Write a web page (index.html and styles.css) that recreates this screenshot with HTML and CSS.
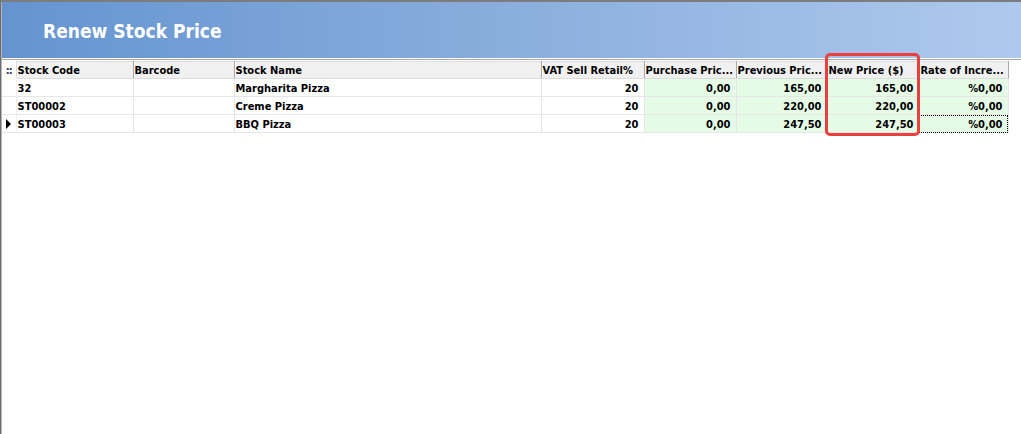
FILE: index.html
```html
<!DOCTYPE html>
<html lang="en">
<head>
    <meta charset="UTF-8">
    <title>Renew Stock Price</title>
    <link rel="stylesheet" href="styles.css">
</head>
<body>
    <div class="window">
        <div class="banner">
            <h1>Renew Stock Price</h1>
        </div>
        <div class="grid-area">
            <table class="grid">
                <colgroup>
                    <col class="c-ind">
                    <col class="c-code">
                    <col class="c-barcode">
                    <col class="c-name">
                    <col class="c-vat">
                    <col class="c-purchase">
                    <col class="c-previous">
                    <col class="c-new">
                    <col class="c-rate">
                </colgroup>
                <thead>
                    <tr>
                        <th class="ind"><span class="dots">::</span></th>
                        <th>Stock Code</th>
                        <th>Barcode</th>
                        <th>Stock Name</th>
                        <th>VAT Sell Retail%</th>
                        <th>Purchase Pric...</th>
                        <th>Previous Pric...</th>
                        <th>New Price ($)</th>
                        <th>Rate of Incre...</th>
                    </tr>
                </thead>
                <tbody>
                    <tr>
                        <td class="ind"></td>
                        <td>32</td>
                        <td></td>
                        <td>Margharita Pizza</td>
                        <td class="num">20</td>
                        <td class="num price">0,00</td>
                        <td class="num price">165,00</td>
                        <td class="num price">165,00</td>
                        <td class="num price">%0,00</td>
                    </tr>
                    <tr>
                        <td class="ind"></td>
                        <td>ST00002</td>
                        <td></td>
                        <td>Creme Pizza</td>
                        <td class="num">20</td>
                        <td class="num price">0,00</td>
                        <td class="num price">220,00</td>
                        <td class="num price">220,00</td>
                        <td class="num price">%0,00</td>
                    </tr>
                    <tr class="current">
                        <td class="ind"><span class="arrow"></span></td>
                        <td>ST00003</td>
                        <td></td>
                        <td>BBQ Pizza</td>
                        <td class="num">20</td>
                        <td class="num price">0,00</td>
                        <td class="num price">247,50</td>
                        <td class="num price">247,50</td>
                        <td class="num price focus">%0,00</td>
                    </tr>
                </tbody>
            </table>
            <div class="highlight"></div>
        </div>
    </div>
</body>
</html>
```

FILE: styles.css
```css
/* window frame */
body {
    margin: 0;
    background: #ffffff;
    font-family: "DejaVu Sans Condensed", "DejaVu Sans", sans-serif;
    font-stretch: condensed;
}
.window {
    height: 432px;
    border-top: 2px solid #7c7c7c;
    border-left: 1px solid #6e6e6e;
    box-shadow: inset 1px 0 0 #b4b4b4;
    overflow: hidden;
}
.banner {
    height: 56px;
    margin-left: 1px;
    padding-left: 41px;
    display: flex;
    align-items: center;
    background: linear-gradient(to right, #6494d0, #8aaedd 50%, #aec9ed);
    border-bottom: 1px solid #ffffff;
}
.banner h1 {
    margin: 2px 0 0 0;
    font-size: 19px;
    font-weight: bold;
    color: #ffffff;
}

/* grid */
.grid-area {
    position: relative;
    border-top: 1px solid #a9a9a9;
    padding: 1px 0 0 1px;
}
.grid {
    border-collapse: collapse;
    table-layout: fixed;
    width: 1005px;
    font-size: 11px;
    font-weight: bold;
    color: #000000;
}
.c-ind { width: 14px; }
.c-code { width: 117px; }
.c-barcode { width: 101px; }
.c-name { width: 307px; }
.c-vat { width: 103px; }
.c-purchase { width: 92px; }
.c-previous { width: 91px; }
.c-new { width: 92px; }
.c-rate { width: 89px; }

.grid th {
    height: 16px;
    padding: 0 2px 0 1px;
    text-align: left;
    white-space: nowrap;
    overflow: hidden;
    background: #f0f0f0;
    border-top: 1px solid #dcdcdc;
    border-bottom: 1px solid #dcdcdc;
    border-right: 1px solid #a8a8a8;
    box-shadow: inset 1px 0 0 #ffffff;
}
.grid th.ind {
    background: #ffffff;
    border-top-color: #ffffff;
    border-bottom-color: #ffffff;
    border-right: 1px solid #dcdcdc;
    padding: 0;
    text-align: center;
}
.dots {
    color: #2a3a55;
    letter-spacing: -1px;
}
.grid td {
    height: 16px;
    padding: 1px 2px 0 1px;
    white-space: nowrap;
    overflow: hidden;
    border-right: 1px solid #e6e6e6;
    border-bottom: 1px solid #e6e6e6;
}
.grid td.ind {
    padding: 0;
    border-right-color: #f0f0f0;
}
.grid td.num {
    text-align: right;
    padding-right: 5px;
}
.grid td.price {
    background: #e6fbe6;
}
.grid td.focus {
    outline: 1px dotted #000000;
    outline-offset: -1px;
}
.arrow {
    display: block;
    width: 0;
    height: 0;
    margin-left: 4px;
    border-top: 5px solid transparent;
    border-bottom: 5px solid transparent;
    border-left: 5px solid #000000;
}

/* red frame drawn over the new price column */
.highlight {
    position: absolute;
    left: 824px;
    top: -7px;
    width: 89px;
    height: 77px;
    border: 3px solid #ea4040;
    border-radius: 5px;
}
```
